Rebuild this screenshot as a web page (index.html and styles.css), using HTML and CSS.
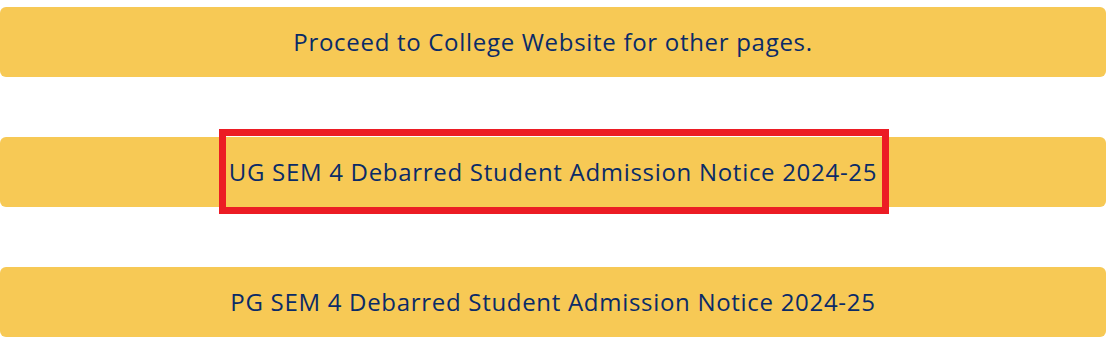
FILE: index.html
```html
<!DOCTYPE html>
<html lang="en">
<head>
<meta charset="utf-8">
<title>Notices</title>
<link rel="stylesheet" href="styles.css">
</head>
<body>
<main class="list">
  <a class="bar" href="#">Proceed to College Website for other pages.</a>
  <a class="bar" href="#"><span class="highlight">UG SEM 4 Debarred Student Admission Notice 2024-25</span></a>
  <a class="bar" href="#">PG SEM 4 Debarred Student Admission Notice 2024-25</a>
</main>
</body>
</html>
```
FILE: styles.css
```css
html, body {
  margin: 0;
  padding: 0;
  background: #ffffff;
}
.list {
  display: flex;
  flex-direction: column;
  gap: 60px;
  padding-top: 7px;
  width: 1106px;
}
.bar {
  display: flex;
  align-items: center;
  justify-content: center;
  height: 70px;
  background: #f7c955;
  border-radius: 6px;
  color: #0a2b68;
  font-family: "Open Sans", sans-serif;
  font-size: 24px;
  line-height: 30px;
  letter-spacing: 0.7px;
  font-weight: 500;
  text-decoration: none;
}
.highlight {
  position: relative;
  display: block;
}
.highlight::after {
  content: "";
  position: absolute;
  left: -10px;
  right: -12px;
  top: -28px;
  bottom: -27px;
  border: 7px solid #ec1c24;
}
```
